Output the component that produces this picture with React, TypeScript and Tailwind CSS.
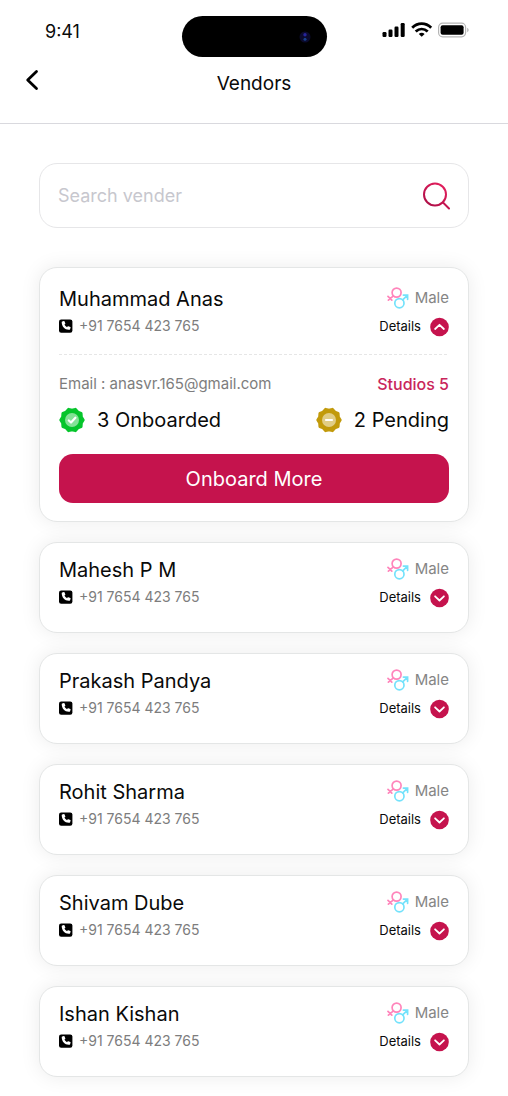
import React, { useState } from 'react'

interface Vendor {
  id: number
  name: string
  phone: string
  gender: string
  email: string
  onboarded: number
  pending: number
}

const VENDORS: Vendor[] = [
  'Muhammad Anas',
  'Mahesh P M',
  'Prakash Pandya',
  'Rohit Sharma',
  'Shivam Dube',
  'Ishan Kishan',
].map((name, id) => ({
  id,
  name,
  phone: '+91 7654 423 765',
  gender: 'Male',
  email: 'anasvr.165@gmail.com',
  onboarded: 3,
  pending: 2,
}))

/* Ten-pointed seal, alternating between outer and inner radius */
const SEAL_POINTS = Array.from({ length: 20 }, (_, i) => {
  const r = i % 2 === 0 ? 11.2 : 9.8
  const a = (i * Math.PI) / 10
  return `${(13 + r * Math.cos(a)).toFixed(2)},${(13 + r * Math.sin(a)).toFixed(2)}`
}).join(' ')

function SealIcon({ color, children }: { color: string; children: React.ReactNode }) {
  return (
    <svg viewBox="0 0 26 26" className="w-[26px] h-[26px] shrink-0" aria-hidden="true">
      <polygon points={SEAL_POINTS} fill={color} stroke={color} strokeWidth="3" strokeLinejoin="round" />
      <circle cx="13" cy="13" r="7" fill="#fff" fillOpacity="0.5" />
      <g fill="none" stroke="#fff" strokeWidth="2.2" strokeLinecap="round" strokeLinejoin="round">
        {children}
      </g>
    </svg>
  )
}

function GenderIcon() {
  return (
    <svg viewBox="0 0 22 22" className="w-[22px] h-[22px] shrink-0" fill="none" strokeWidth="1.7" strokeLinecap="round" aria-hidden="true">
      <g stroke="#ff85bb">
        <circle cx="9.6" cy="5.6" r="4.5" />
        <path d="M6.400 8.800L1.400 13.200M1 9.400l3.800 3.800" />
      </g>
      <g stroke="#74e2fb">
        <circle cx="12.400" cy="16.200" r="4.600" />
        <path d="M15.700 12.900l4.600-4.600M16.400 8.100h4.200v4.200" />
      </g>
    </svg>
  )
}

function PhoneIcon() {
  return (
    <svg viewBox="0 0 14 14" className="w-[14px] h-[14px] shrink-0" aria-hidden="true">
      <rect x="0" y="0.400" width="13.400" height="13.400" rx="2.200" fill="#000" />
      <path
        d="M3.200 2.600l1.700-.5c.3-.1.500 0 .6.300l.8 1.900c.1.200 0 .500-.1.600l-.8.700c.6 1.200 1.400 2 2.600 2.600l.8-.9c.1-.2.400-.2.600-.1l1.900.8c.3.100.4.400.3.600l-.5 1.700c0 .3-.2.500-.500.5C6.200 11.300 2.700 7.800 2.700 3.100c0-.3.200-.500.500-.500z"
        fill="#fff"
      />
    </svg>
  )
}

function StatusIcons() {
  return (
    <svg viewBox="0 0 88 16" className="w-[88px] h-[16px]" aria-hidden="true">
      <rect x="0.500" y="10" width="4" height="5" rx="1.200" />
      <rect x="6.500" y="7.500" width="4" height="7.500" rx="1.200" />
      <rect x="12.500" y="4.500" width="4" height="10.500" rx="1.200" />
      <rect x="18.700" y="1" width="4" height="14" rx="1.200" />
      <g fill="none" stroke="#000" strokeWidth="2.800">
        <path d="M30.200 5.700c5.600-5.400 13.400-5.400 19 0" />
        <path d="M33.700 9.600c3.600-3.400 8.400-3.400 12 0" />
      </g>
      <path d="M36.800 11.900c1.800-1.500 4-1.500 5.800 0L39.700 14.800z" />
      <rect x="56.600" y="1.200" width="27" height="13.600" rx="4" fill="none" stroke="#b5b5b5" strokeWidth="1.200" />
      <rect x="58.600" y="3.200" width="23" height="9.600" rx="2" />
      <path d="M85.200 5.800c2 .8 2 3.600 0 4.400z" fill="#b5b5b5" />
    </svg>
  )
}

function Header() {
  return (
    <header className="border-b border-[#d9d9de] pt-4 pb-3">
      {/* ── Phone status bar ── */}
      <div className="grid grid-cols-[1fr_auto_1fr]">
        <span className="pl-[45px] text-[18px] leading-8">9:41</span>
        <div className="w-[145px] h-[41px] rounded-full bg-black flex items-center justify-end pr-4">
          <svg viewBox="0 0 12 12" className="w-3 h-3" aria-hidden="true">
            <circle cx="6" cy="6" r="5.500" fill="#0b0a2c" />
            <circle cx="6" cy="3.800" r="1.700" fill="#26249a" />
            <circle cx="6" cy="8.300" r="1.500" fill="#17408c" />
          </svg>
        </div>
        <div className="flex justify-end items-start pr-[38px] pt-[6px]">
          <StatusIcons />
        </div>
      </div>

      {/* ── Title ── */}
      <div className="grid grid-cols-[1fr_auto_1fr]">
        <button type="button" aria-label="Back" className="w-16 h-[46px] flex items-center pl-[25px]">
          <svg viewBox="0 0 14 22" className="w-[14px] h-[22px]" fill="none" stroke="#000" strokeWidth="2.800" strokeLinecap="round" strokeLinejoin="round" aria-hidden="true">
            <path d="M11.500 2.500L2.700 11l8.800 8.500" />
          </svg>
        </button>
        <h1 className="text-[19px] leading-[54px]">Vendors</h1>
      </div>
    </header>
  )
}

interface CardProps {
  vendor: Vendor
  open: boolean
  onToggle: () => void
}

function VendorCard({ vendor, open, onToggle }: CardProps) {
  return (
    <li className={`bg-white border border-[#e4e6e6] rounded-[18px] shadow-[0_0_20px_rgba(0,0,0,0.08)] px-[19px] ${open ? 'pt-[17px] pb-[18px]' : 'pt-[13px] pb-[18px]'}`}>
      <div className="flex justify-between">
        <div>
          <h2 className="text-[20px] leading-7">{vendor.name}</h2>
          <p className="flex items-center gap-[6px] text-[14px] leading-[26px] text-[#7d7d7d]">
            <PhoneIcon /> {vendor.phone}
          </p>
        </div>
        <div className="flex flex-col items-end">
          <span className="flex items-center gap-[6px] h-[26px] text-[15px] text-[#858585]">
            <GenderIcon /> {vendor.gender}
          </span>
          <button type="button" aria-expanded={open} onClick={onToggle} className="flex items-center gap-2 h-8 text-[13px]">
            Details
            <svg viewBox="0 0 20 20" className="w-5 h-5" aria-hidden="true">
              <circle cx="10.500" cy="10" r="9.300" fill="#c5134d" />
              <path
                d={open ? 'M6.100 12l4.400-4.200 4.400 4.200' : 'M6.100 8.300l4.400 4.200 4.400-4.200'}
                fill="none" stroke="#fff" strokeWidth="1.800" strokeLinecap="round" strokeLinejoin="round"
              />
            </svg>
          </button>
        </div>
      </div>

      {open && (
        <div>
          <svg className="block w-full h-[2px] mt-[10px]" aria-hidden="true">
            <line x1="0" y1="1.500" x2="100%" y2="1.500" stroke="#e6e6e6" strokeWidth="1" strokeDasharray="3 2" />
          </svg>
          <div className="flex justify-between items-center mt-[15px] h-7">
            <span className="text-[15px] text-[#7d7d7d]">Email : {vendor.email}</span>
            <span className="text-base font-medium text-[#c9265b]">Studios {vendor.onboarded + vendor.pending}</span>
          </div>
          <div className="flex justify-between items-center mt-1 h-9 text-[20px]">
            <span className="flex items-center gap-3">
              <SealIcon color="#06c52c"><path d="M9.800 13.500l2.200 2 4.400-4.800" /></SealIcon>
              {vendor.onboarded} Onboarded
            </span>
            <span className="flex items-center gap-3">
              <SealIcon color="#c29a0b"><path d="M10 13h6" /></SealIcon>
              {vendor.pending} Pending
            </span>
          </div>
          <button type="button" className="block mt-4 w-full h-[49px] rounded-[14px] bg-[#c5134d] text-white text-[20px]">
            Onboard More
          </button>
        </div>
      )}
    </li>
  )
}

export default function App() {
  const [openId, setOpenId] = useState<number | null>(0)
  const [query, setQuery] = useState('')

  const vendors = VENDORS.filter(v => v.name.toLowerCase().includes(query.trim().toLowerCase()))

  return (
    <div className="min-h-screen bg-white text-[#0a0a0a] font-['Inter',sans-serif]">
      <Header />
      <main className="px-[39px] pt-[39px] pb-5">
        {/* ── Search ── */}
        <form role="search" onSubmit={e => e.preventDefault()}
          className="flex items-center h-[65px] px-[18px] border border-[#e6e6e8] rounded-[18px]">
          <input
            type="text"
            aria-label="Search vender"
            placeholder="Search vender"
            value={query}
            onChange={e => setQuery(e.target.value)}
            className="flex-1 min-w-0 text-[18px] placeholder:text-[#c7c7ce] focus:outline-none"
          />
          <button type="submit" aria-label="Search">
            <svg viewBox="0 0 28 28" className="w-7 h-7" fill="none" stroke="url(#searchStroke)" strokeWidth="2" strokeLinecap="round" aria-hidden="true">
              <defs>
                <linearGradient id="searchStroke" gradientUnits="userSpaceOnUse" x1="24" y1="2" x2="6" y2="26">
                  <stop stopColor="#e8205f" />
                  <stop offset="1" stopColor="#a90d45" />
                </linearGradient>
              </defs>
              <circle cx="13" cy="12.500" r="11" />
              <path d="M21 20.500l6 6" />
            </svg>
          </button>
        </form>

        {/* ── Vendor list ── */}
        <ul className="mt-[39px] flex flex-col gap-5">
          {vendors.map(v => (
            <VendorCard
              key={v.id}
              vendor={v}
              open={openId === v.id}
              onToggle={() => setOpenId(openId === v.id ? null : v.id)}
            />
          ))}
        </ul>
      </main>
    </div>
  )
}
